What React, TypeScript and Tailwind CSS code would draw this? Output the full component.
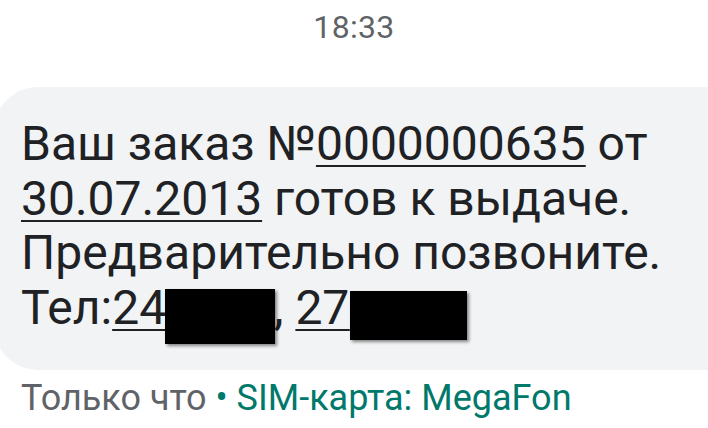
import React from "react";

const U = "underline decoration-[2px] underline-offset-[5px]";

export default function App() {
  return (
    <div className="w-[708px] h-[428px] bg-white overflow-hidden font-['Roboto',sans-serif]">
      <div className="h-[87px] pt-[11px] text-center text-[32px] leading-[32px] text-[#5f6368] tracking-[0.01em]">
        18:33
      </div>
      <div className="ml-[-6px] mr-[-40px] rounded-[44px] bg-[#f1f3f4] pt-[30px] pb-[35px] pl-[27px] text-[48px] leading-[54.5px] text-[#202124]">
        <div>
          Ваш заказ №<span className={U}>0000000635</span> от
        </div>
        <div>
          <span className={U}>30.07.2013</span> готов к выдаче.
        </div>
        <div>Предварительно позвоните.</div>
        <div>
          Тел:
          <span className={U}>
            24
            <span className="relative text-transparent">
              0000
              <span className="absolute left-[-1px] top-[10px] w-[110px] h-[55px] bg-black shadow-[2px_2px_3px_rgba(0,0,0,0.45)]" />
            </span>
          </span>
          ,{" "}
          <span className={U}>
            27
            <span className="relative text-transparent">
              0000
              <span className="absolute left-[1px] top-[12px] w-[117px] h-[49px] bg-black shadow-[2px_2px_3px_rgba(0,0,0,0.45)]" />
            </span>
          </span>
        </div>
      </div>
      <div className="mt-[10px] pl-[21px] text-[36px] leading-[36px] text-[#5f6368]">
        Только что <span className="text-[#00796b]">• SIM-карта: MegaFon</span>
      </div>
    </div>
  );
}
